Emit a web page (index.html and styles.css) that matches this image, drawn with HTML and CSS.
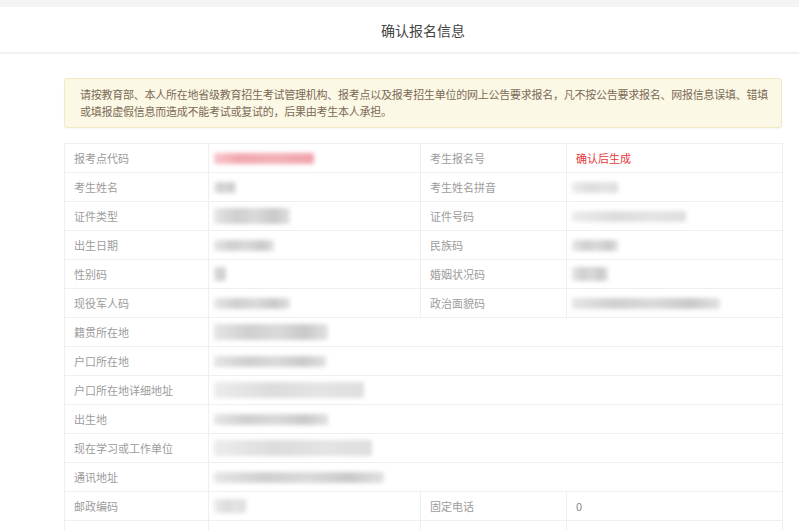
FILE: index.html
```html
<!DOCTYPE html>
<html lang="zh-CN">
<head>
<meta charset="utf-8">
<title>确认报名信息</title>
<link rel="stylesheet" href="styles.css">
</head>
<body>
<div class="topbar"></div>
<header class="header">
  <div class="wrap header-inner"><h1 class="title">确认报名信息</h1></div>
</header>
<main class="wrap content">
  <div class="notice">请按教育部、本人所在地省级教育招生考试管理机构、报考点以及报考招生单位的网上公告要求报名，凡不按公告要求报名、网报信息误填、错填或填报虚假信息而造成不能考试或复试的，后果由考生本人承担。</div>
  <table class="info">
    <colgroup><col class="c1"><col class="c2"><col class="c3"><col class="c4"></colgroup>
    <tbody>
      <tr><td class="lbl">报考点代码</td><td class="val"><span class="blur pink" style="width:100px"></span></td><td class="lbl">考生报名号</td><td class="val red">确认后生成</td></tr>
      <tr><td class="lbl">考生姓名</td><td class="val"><span class="blur" style="width:22px"></span></td><td class="lbl">考生姓名拼音</td><td class="val"><span class="blur light" style="width:46px"></span></td></tr>
      <tr><td class="lbl">证件类型</td><td class="val"><span class="blur tall" style="width:76px"></span></td><td class="lbl">证件号码</td><td class="val"><span class="blur light" style="width:114px"></span></td></tr>
      <tr><td class="lbl">出生日期</td><td class="val"><span class="blur" style="width:60px"></span></td><td class="lbl">民族码</td><td class="val"><span class="blur" style="width:46px"></span></td></tr>
      <tr><td class="lbl">性别码</td><td class="val"><span class="blur tall sm" style="width:12px"></span></td><td class="lbl">婚姻状况码</td><td class="val"><span class="blur tall sm" style="width:36px"></span></td></tr>
      <tr><td class="lbl">现役军人码</td><td class="val"><span class="blur" style="width:76px"></span></td><td class="lbl">政治面貌码</td><td class="val"><span class="blur" style="width:148px"></span></td></tr>
      <tr><td class="lbl">籍贯所在地</td><td class="val" colspan="3"><span class="blur tall" style="width:114px"></span></td></tr>
      <tr><td class="lbl">户口所在地</td><td class="val" colspan="3"><span class="blur" style="width:112px"></span></td></tr>
      <tr><td class="lbl">户口所在地详细地址</td><td class="val" colspan="3"><span class="blur tall light" style="width:150px"></span></td></tr>
      <tr><td class="lbl">出生地</td><td class="val" colspan="3"><span class="blur" style="width:114px"></span></td></tr>
      <tr><td class="lbl">现在学习或工作单位</td><td class="val" colspan="3"><span class="blur tall light" style="width:158px"></span></td></tr>
      <tr><td class="lbl">通讯地址</td><td class="val" colspan="3"><span class="blur" style="width:170px"></span></td></tr>
      <tr><td class="lbl">邮政编码</td><td class="val"><span class="blur tall sm light" style="width:32px"></span></td><td class="lbl">固定电话</td><td class="val">0</td></tr>
      <tr><td class="lbl"></td><td class="val"></td><td class="lbl"></td><td class="val"></td></tr>
    </tbody>
  </table>
</main>
</body>
</html>
```

FILE: styles.css
```css
html, body {
  margin: 0;
  padding: 0;
  background: #ffffff;
  font-family: "Noto Sans CJK SC", "Noto Sans", "Liberation Sans", sans-serif;
  overflow: hidden;
}
.wrap {
  width: 718px;
  margin-left: 64px;
}
.topbar {
  height: 7px;
  background: #f4f4f4;
}
.header {
  height: 45px;
  background: #ffffff;
  border-bottom: 2px solid #f1f1f1;
}
.header-inner {
  height: 45px;
  display: flex;
  align-items: center;
  justify-content: center;
}
.title {
  margin: 0;
  font-size: 14px;
  font-weight: normal;
  color: #444;
}
.content {
  padding-top: 24px;
}
.notice {
  background: #fcf8e6;
  border: 1px solid #f3e8c4;
  border-radius: 3px;
  padding: 7px 8px 7px 15px;
  font-size: 11px;
  line-height: 17px;
  letter-spacing: -0.25px;
  color: #7b6a55;
  box-shadow: 0 1px 2px rgba(0,0,0,0.04);
}
.info {
  margin-top: 15px;
  width: 718px;
  border-collapse: collapse;
  table-layout: fixed;
  font-size: 11px;
}
.c1 { width: 144px; }
.c2 { width: 212px; }
.c3 { width: 146px; }
.c4 { width: 216px; }
.info td {
  height: 28px;
  padding: 0 9px;
  border: 1px solid #efefef;
  vertical-align: middle;
  white-space: nowrap;
  overflow: hidden;
}
.lbl {
  color: #9c9c9c;
}
.val {
  color: #888;
}
.val.red {
  color: #e5393a;
}
.blur {
  display: block;
  height: 11px;
  margin-left: -4px;
  background: linear-gradient(90deg, #e6e6e6 0%, #cfcfcf 30%, #dadada 55%, #c9c9c9 80%, #e2e2e2 100%);
  filter: blur(2px);
  border-radius: 2px;
}
.blur.tall {
  height: 16px;
}
.blur.tall.sm {
  height: 14px;
}
.blur.light {
  background: linear-gradient(90deg, #ececec 0%, #dcdcdc 40%, #e4e4e4 70%, #dedede 100%);
}
.blur.pink {
  background: linear-gradient(90deg, #f6c7cc 0%, #f2a6ae 25%, #f3b0b7 60%, #f0a2aa 100%);
}
```
